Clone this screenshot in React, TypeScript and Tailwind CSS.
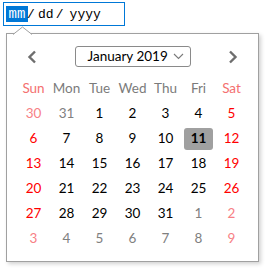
const weekdays = [
  { label: "Sun", cls: "text-[#f47070]" },
  { label: "Mon", cls: "text-[#7b7b7b]" },
  { label: "Tue", cls: "text-[#7b7b7b]" },
  { label: "Wed", cls: "text-[#7b7b7b]" },
  { label: "Thu", cls: "text-[#7b7b7b]" },
  { label: "Fri", cls: "text-[#7b7b7b]" },
  { label: "Sat", cls: "text-[#f47070]" },
];

type Day = { n: number; cur: boolean };

const days: Day[] = [
  { n: 30, cur: false },
  { n: 31, cur: false },
  ...Array.from({ length: 31 }, (_, i) => ({ n: i + 1, cur: true })),
  ...Array.from({ length: 9 }, (_, i) => ({ n: i + 1, cur: false })),
];

const dayColor = (d: Day, col: number) => {
  const weekend = col === 0 || col === 6;
  if (d.cur) return weekend ? "text-[#ff0000]" : "text-black";
  return weekend ? "text-[#f77f86]" : "text-[#808080]";
};

const App = () => {
  return (
    <div className="w-[265px] h-[268px] bg-white pt-[2px] pl-[3px]">
      <div className="relative w-[122px] h-[24px] border border-[#0078d7] flex items-center pl-[2px] font-['Liberation_Mono',monospace] text-[13px] text-black whitespace-nowrap">
        <span className="w-[22px] h-[16px] bg-[#0078d7] text-white flex items-center justify-center leading-none text-[14px]">mm</span>
        <span className="ml-[-1px] w-[8px] text-center leading-none">/</span>
        <span className="ml-[3px] leading-none">dd</span>
        <span className="ml-[2px] w-[8px] text-center leading-none">/</span>
        <span className="ml-[6px] leading-none">yyyy</span>
      </div>

      <div className="relative mt-[7px] ml-[3px] w-[253px] h-[229px] border border-[#a0a0a0] bg-white shadow-[2px_2px_4px_rgba(0,0,0,0.18)] font-['Lato',sans-serif]">
        <svg className="absolute left-[6px] top-[-8px]" width="20" height="9" viewBox="0 0 20 9">
          <polygon points="0,8.5 9.5,1 19,8.5" fill="white" />
          <polyline points="0,8.5 9.5,1 19,8.5" fill="none" stroke="#a0a0a0" strokeWidth="1" />
        </svg>

        <div className="flex items-center justify-between px-[20px] pt-[12px]">
          <svg width="10" height="14" viewBox="0 0 10 14">
            <path d="M8 1.5 L2.5 7 L8 12.5" fill="none" stroke="#6e6e6e" strokeWidth="2.4" />
          </svg>
          <div className="w-[116px] h-[21px] border border-[#8a8a8a] rounded-[3px] flex items-center pl-[12px] pr-[6px] justify-between">
            <span className="text-[13.5px] text-black leading-none whitespace-nowrap">January 2019</span>
            <svg width="11" height="7" viewBox="0 0 11 7" className="shrink-0">
              <path d="M1 1 L5.5 5.5 L10 1" fill="none" stroke="#7a7a7a" strokeWidth="1.1" />
            </svg>
          </div>
          <svg width="10" height="14" viewBox="0 0 10 14">
            <path d="M2 1.5 L7.5 7 L2 12.5" fill="none" stroke="#6e6e6e" strokeWidth="2.4" />
          </svg>
        </div>

        <div className="grid grid-cols-[repeat(7,33px)] auto-rows-[25px] px-[10px] mt-[9px] text-[13.5px]">
          {weekdays.map((w) => (
            <div key={w.label} className={`flex items-center justify-center ${w.cls}`}>
              {w.label}
            </div>
          ))}
          {days.map((d, i) => {
            const selected = d.cur && d.n === 11;
            return (
              <div key={i} className={`flex items-center justify-center ${dayColor(d, i % 7)}`}>
                {selected ? (
                  <span className="w-[29px] h-[22px] rounded-[3px] bg-[#a0a0a0] flex items-center justify-center font-bold text-black">
                    {d.n}
                  </span>
                ) : (
                  d.n
                )}
              </div>
            );
          })}
        </div>
      </div>
    </div>
  );
};

export default App;
